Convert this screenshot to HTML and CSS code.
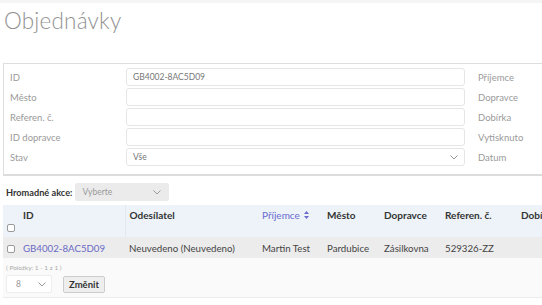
FILE: index.html
```html
<!DOCTYPE html>
<html lang="cs">
<head>
    <meta charset="UTF-8">
    <title>Objednávky</title>
    <link rel="stylesheet" href="styles.css">
</head>
<body>
    <div class="page">
        <h1>Objednávky</h1>

        <div class="filter">
            <label>ID</label>
            <div class="input">GB4002-8AC5D09</div>
            <label class="side">Příjemce</label>

            <label>Město</label>
            <div class="input"></div>
            <label class="side">Dopravce</label>

            <label>Referen. č.</label>
            <div class="input"></div>
            <label class="side">Dobírka</label>

            <label>ID dopravce</label>
            <div class="input"></div>
            <label class="side">Vytisknuto</label>

            <label>Stav</label>
            <div class="input select">Vše
                <svg class="chev" width="8" height="5" viewBox="0 0 8 5"><polyline points="0.5,0.5 4,4 7.5,0.5" fill="none" stroke="#999" stroke-width="1"/></svg>
            </div>
            <label class="side">Datum</label>
        </div>

        <div class="bulk">
            <strong>Hromadné akce:</strong>
            <div class="bulk-select">Vyberte
                <svg class="chev" width="8" height="5" viewBox="0 0 8 5"><polyline points="0.5,0.5 4,4 7.5,0.5" fill="none" stroke="#999" stroke-width="1"/></svg>
            </div>
        </div>

        <table class="orders">
            <colgroup>
                <col style="width: 16px">
                <col style="width: 106px">
                <col style="width: 133px">
                <col style="width: 65px">
                <col style="width: 57px">
                <col style="width: 61px">
                <col style="width: 76px">
                <col style="width: 80px">
            </colgroup>
            <thead>
                <tr>
                    <th class="chk-cell" colspan="2">
                        <div class="id-head">
                            <span class="id-label">ID</span>
                            <span class="chk"></span>
                        </div>
                    </th>
                    <th class="sep">Odesílatel</th>
                    <th class="sorted">Příjemce
                        <svg width="5" height="8" viewBox="0 0 5 8"><polygon points="2.5,0 5,3 0,3" fill="#6a6ad0"/><polygon points="0,5 5,5 2.5,8" fill="#6a6ad0"/></svg>
                    </th>
                    <th>Město</th>
                    <th>Dopravce</th>
                    <th>Referen. č.</th>
                    <th>Dobírka</th>
                </tr>
            </thead>
            <tbody>
                <tr>
                    <td class="chk-cell"><span class="chk"></span></td>
                    <td><a href="#">GB4002-8AC5D09</a></td>
                    <td>Neuvedeno (Neuvedeno)</td>
                    <td>Martin Test</td>
                    <td>Pardubice</td>
                    <td>Zásilkovna</td>
                    <td>529326-ZZ</td>
                    <td></td>
                </tr>
            </tbody>
        </table>

        <div class="pager">
            <div class="count">( Položky: 1 - 1 z 1 )</div>
            <div class="pager-row">
                <div class="per-page">8
                    <svg class="chev" width="8" height="5" viewBox="0 0 8 5"><polyline points="0.5,0.5 4,4 7.5,0.5" fill="none" stroke="#999" stroke-width="1"/></svg>
                </div>
                <button>Změnit</button>
            </div>
        </div>
    </div>
</body>
</html>
```

FILE: styles.css
```css
body {
    margin: 0;
    font-family: Lato, "Noto Sans", sans-serif;
    background: #fff;
    overflow: hidden;
}
.page {
    width: 640px;
    border-top: 3px solid #f5f5f5;
}
h1 {
    margin: 0;
    padding: 4px 0 0 4px;
    height: 60px;
    box-sizing: border-box;
    font-size: 22.5px;
    font-weight: 300;
    color: #929292;
    letter-spacing: 0.2px;
}
.filter {
    margin-left: 3px;
    border: 1px solid #dedede;
    border-bottom: 2px solid #dcdcdc;
    border-right: none;
    padding: 4px 0 8px 6px;
    display: grid;
    grid-template-columns: 116px 339px 13px 100px;
    row-gap: 2px;
    align-items: center;
}
.filter label {
    font-size: 9.5px;
    color: #9a9a9a;
}
.filter .side {
    grid-column: 4;
}
.input {
    grid-column: 2;
    height: 18px;
    box-sizing: border-box;
    border: 1px solid #e6e6e6;
    border-radius: 3px;
    padding: 0 6px;
    font-size: 8.5px;
    line-height: 16px;
    color: #777;
}
.select {
    display: flex;
    justify-content: space-between;
    align-items: center;
}
.bulk {
    display: flex;
    align-items: center;
    padding: 7px 0 0 6px;
    height: 18px;
    font-size: 9.2px;
    color: #333;
}
.bulk strong {
    font-weight: 700;
}
.bulk-select {
    margin-left: 3px;
    width: 94px;
    height: 18px;
    box-sizing: border-box;
    background: #ebebeb;
    border-radius: 2px;
    padding: 0 8px 0 7px;
    display: flex;
    justify-content: space-between;
    align-items: center;
    font-size: 8.5px;
    color: #9a9a9a;
}
.orders {
    margin: 4px 0 0 3px;
    border-collapse: collapse;
    table-layout: fixed;
    width: 594px;
    font-size: 10px;
}
.orders th {
    background: #edf3f9;
    height: 32px;
    padding: 4px 4px 0;
    text-align: left;
    vertical-align: top;
    font-weight: 700;
    color: #333;
    box-sizing: border-box;
}
.orders th.sep {
    border-left: 1px solid #e0e8f0;
}
.orders th.sorted {
    color: #6a6ad0;
    font-weight: 400;
}
.orders th.sorted svg {
    margin-left: 2px;
}
.orders th.chk-cell {
    padding: 4px 0 0 4px;
}
.id-head {
    display: flex;
    flex-direction: column;
}
.id-label {
    padding-left: 16px;
}
.chk {
    display: inline-block;
    width: 8px;
    height: 8px;
    box-sizing: border-box;
    border: 1px solid #9a9a9a;
    border-radius: 2px;
    background: #fff;
}
.id-head .chk {
    margin-top: 3px;
}
.orders td {
    background: #ececec;
    height: 21px;
    padding: 0 4px;
    font-size: 9.7px;
    color: #444;
    white-space: nowrap;
}
.orders td.chk-cell {
    padding: 0 0 0 4px;
}
.orders td.chk-cell .chk {
    vertical-align: middle;
}
.orders a {
    color: #6a6ac4;
    text-decoration: none;
}
.pager {
    margin-left: 3px;
    background: #fafafa;
    border-bottom: 1px solid #ececec;
    padding: 6px 0 4px 3px;
}
.count {
    font-size: 6.5px;
    color: #aaa;
}
.pager-row {
    display: flex;
    align-items: center;
    margin-top: 4px;
}
.per-page {
    width: 46px;
    height: 18px;
    box-sizing: border-box;
    background: #fff;
    border: 1px solid #eee;
    border-radius: 2px;
    padding: 0 5px 0 9px;
    display: flex;
    justify-content: space-between;
    align-items: center;
    font-size: 8.5px;
    color: #999;
}
button {
    margin-left: 11px;
    height: 17px;
    padding: 0 5px;
    border: 1px solid #ccc;
    border-radius: 2px;
    background: #eee;
    font-family: inherit;
    font-size: 9.5px;
    font-weight: 700;
    color: #333;
}
```
